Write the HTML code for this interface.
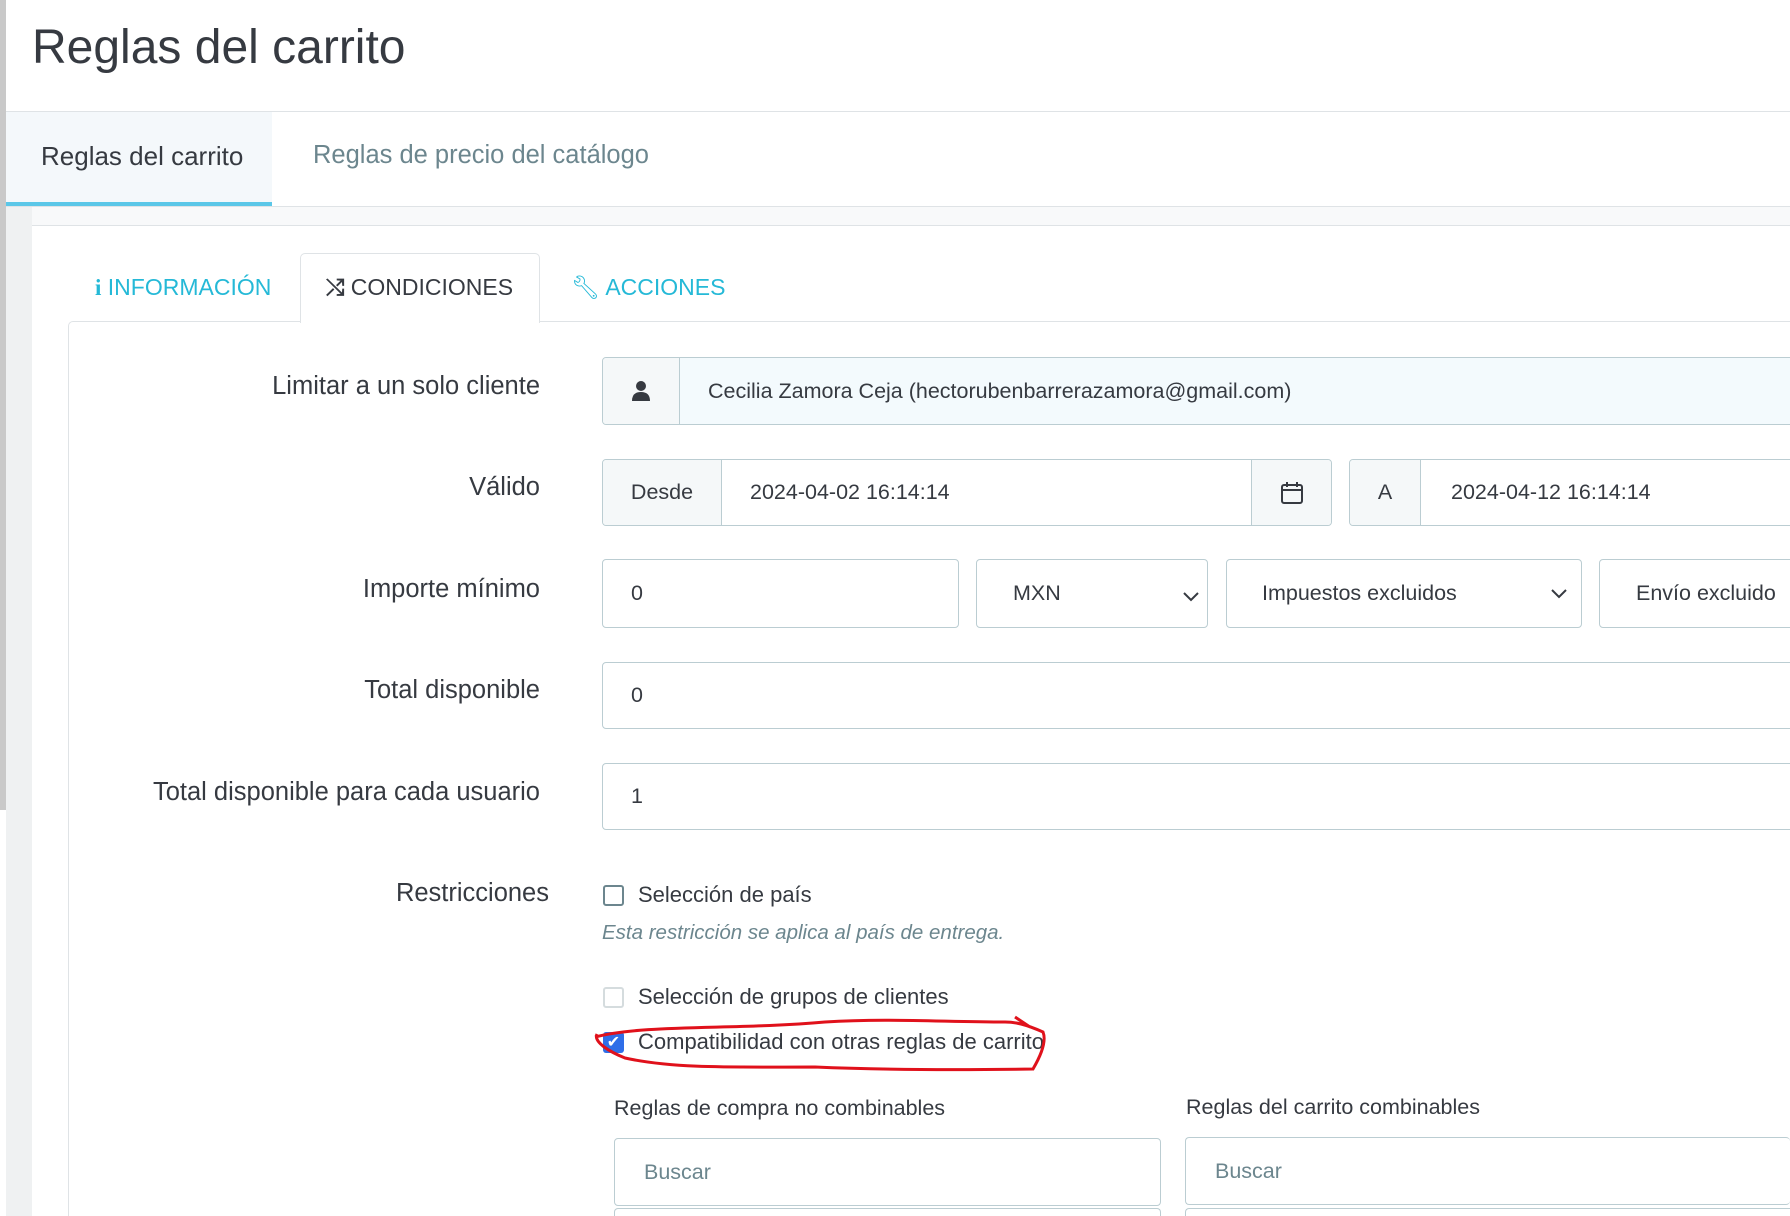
<!DOCTYPE html>
<html style="width:1790px;height:1216px;overflow:hidden"><head><meta charset="utf-8"><style>
*{box-sizing:border-box;margin:0;padding:0}
body{width:1790px;height:1216px;overflow:hidden;background:#fff;font-family:"Liberation Sans",sans-serif;color:#363a41;position:relative}
.a{position:absolute}
.lbl{position:absolute;right:1250px;font-size:25.5px;color:#363a41;text-align:right;white-space:nowrap}
.box{position:absolute;border:1px solid #bbcdd2;border-radius:4px;background:#fff;font-size:21.5px;color:#363a41;display:flex;align-items:center;overflow:hidden}
.add{background:#f5f8f9;border-right:1px solid #bbcdd2;height:100%;display:flex;align-items:center;justify-content:center}
.cb{position:absolute;width:21px;height:21px;border:2px solid #6c868e;border-radius:3px;background:#fff}
.t{position:absolute;font-size:22px;white-space:nowrap}
</style></head><body>
<div class="a" style="left:0;top:0;width:6px;height:810px;background:#c9c9c9"></div>
<div class="a" style="left:32px;top:20px;font-size:48px;color:#363a41">Reglas del carrito</div>
<div class="a" style="left:6px;top:111px;right:0;height:1px;background:#dfe3e6"></div>
<div class="a" style="left:6px;top:112px;width:266px;height:95px;background:#f4f8fb"></div>
<div class="a" style="left:6px;top:202px;width:266px;height:5px;background:#5bc7e8"></div>
<div class="a" style="left:41px;top:141px;font-size:26px;color:#363a41">Reglas del carrito</div>
<div class="a" style="left:313px;top:141px;font-size:25.5px;color:#6c868e">Reglas de precio del catálogo</div>
<div class="a" style="left:6px;top:206px;right:0;height:1px;background:#dfe3e6"></div>
<div class="a" style="left:6px;top:207px;width:26px;height:1009px;background:#eff1f2"></div>
<div class="a" style="left:32px;top:207px;right:0;height:19px;background:#f8f9fa;border-bottom:1px solid #dfe3e6"></div>
<div class="a" style="left:68px;top:321px;width:1722px;height:895px;border:1px solid #dfe3e6;border-bottom:none;border-right:none;border-radius:5px 0 0 0"></div>
<div class="a" style="left:300px;top:253px;width:240px;height:70px;border:1px solid #dfe3e6;border-bottom:none;border-radius:5px 5px 0 0;background:#fff"></div>
<div class="a" style="left:95px;top:274px;font-size:23px;color:#25b9d7"><b style="font-family:'Liberation Serif',serif">i</b> INFORMACIÓN</div>
<div class="a" style="left:326px;top:274px;font-size:23px;color:#363a41"><span style="font-weight:bold">⤭</span> CONDICIONES</div>
<div class="a" style="left:571px;top:274px;font-size:23px;color:#25b9d7"><span>🔧︎</span> ACCIONES</div>
<div class="lbl" style="top:372px;right:1250px">Limitar a un solo cliente</div>
<div class="box" style="left:602px;top:357px;width:1200px;height:68px;background:#f3fafd"><div class="add" style="width:77px"><svg width="20" height="22" viewBox="0 0 20 22"><circle cx="10" cy="6" r="5" fill="#363a41"/><path d="M1 21q0-9 9-9t9 9z" fill="#363a41"/></svg></div><span style="margin-left:28px">Cecilia Zamora Ceja (hectorubenbarrerazamora@gmail.com)</span></div>
<div class="lbl" style="top:473px">Válido</div>
<div class="box" style="left:602px;top:459px;width:730px;height:67px"><div class="add" style="width:119px">Desde</div><span style="margin-left:28px;flex:1">2024-04-02 16:14:14</span><div class="add" style="width:80px;border-right:none;border-left:1px solid #bbcdd2"><svg width="24" height="24" viewBox="0 0 24 24" fill="none" stroke="#363a41" stroke-width="2"><rect x="2" y="4" width="20" height="18" rx="2"/><path d="M2 9h20M7 1v5M17 1v5"/></svg></div></div>
<div class="box" style="left:1349px;top:459px;width:460px;height:67px"><div class="add" style="width:71px">A</div><span style="margin-left:30px">2024-04-12 16:14:14</span></div>
<div class="lbl" style="top:575px">Importe mínimo</div>
<div class="box" style="left:602px;top:559px;width:357px;height:69px"><span style="margin-left:28px">0</span></div>
<div class="box" style="left:976px;top:559px;width:232px;height:69px"><span style="margin-left:36px;flex:1">MXN</span></div>
<div class="box" style="left:1226px;top:559px;width:356px;height:69px"><span style="margin-left:35px;flex:1">Impuestos excluidos</span><svg style="margin-right:14px" width="16" height="10"><path d="M1 1l7 7 7-7" stroke="#363a41" stroke-width="2" fill="none"/></svg></div>
<div class="box" style="left:1599px;top:559px;width:220px;height:69px"><span style="margin-left:36px">Envío excluido</span></div>
<div class="a" style="left:1183px;top:589px"><svg width="16" height="10"><path d="M1 1l7 7 7-7" stroke="#363a41" stroke-width="2" fill="none"/></svg></div>
<div class="lbl" style="top:676px">Total disponible</div>
<div class="box" style="left:602px;top:662px;width:1200px;height:67px"><span style="margin-left:28px">0</span></div>
<div class="lbl" style="top:778px">Total disponible para cada usuario</div>
<div class="box" style="left:602px;top:763px;width:1200px;height:67px"><span style="margin-left:28px">1</span></div>
<div class="lbl" style="top:879px;right:1241px">Restricciones</div>
<div class="cb" style="left:603px;top:885px"></div>
<div class="t" style="left:638px;top:882px">Selección de país</div>
<div class="t" style="left:602px;top:921px;font-style:italic;color:#6c868e;font-size:20.5px">Esta restricción se aplica al país de entrega.</div>
<div class="cb" style="left:603px;top:987px;border-color:#d5dcde"></div>
<div class="t" style="left:638px;top:984px">Selección de grupos de clientes</div>
<div class="cb" style="left:603px;top:1032px;border:none;background:#2f6ee8;color:#fff;font-size:16px;text-align:center;line-height:21px">✔</div>
<div class="t" style="left:638px;top:1029px">Compatibilidad con otras reglas de carrito</div>
<svg class="a" style="left:585px;top:1012px" width="480" height="66"><path d="M10 25C60 12 150 18 240 10 300 6 360 10 420 10 430 10 440 12 458 20 462 30 455 45 448 57 380 58 300 58 230 55 150 55 90 57 40 46 25 40 8 30 12 22M430 5l15 10" stroke="#e0111b" stroke-width="3" fill="none"/></svg>
<div class="t" style="left:614px;top:1096px;color:#363a41;font-size:21.5px">Reglas de compra no combinables</div>
<div class="t" style="left:1186px;top:1095px;font-size:21.5px">Reglas del carrito combinables</div>
<div class="box" style="left:614px;top:1138px;width:547px;height:68px"><span style="margin-left:29px;color:#6c868e">Buscar</span></div>
<div class="box" style="left:1185px;top:1137px;width:605px;height:68px;border-right:none"><span style="margin-left:29px;color:#6c868e">Buscar</span></div>
<div class="a" style="left:614px;top:1208px;width:547px;height:8px;border:1px solid #bbcdd2;border-bottom:none;border-radius:4px 4px 0 0"></div>
<div class="a" style="left:1185px;top:1208px;width:605px;height:8px;border:1px solid #bbcdd2;border-bottom:none;border-right:none;border-radius:4px 0 0 0"></div>
</body></html>
